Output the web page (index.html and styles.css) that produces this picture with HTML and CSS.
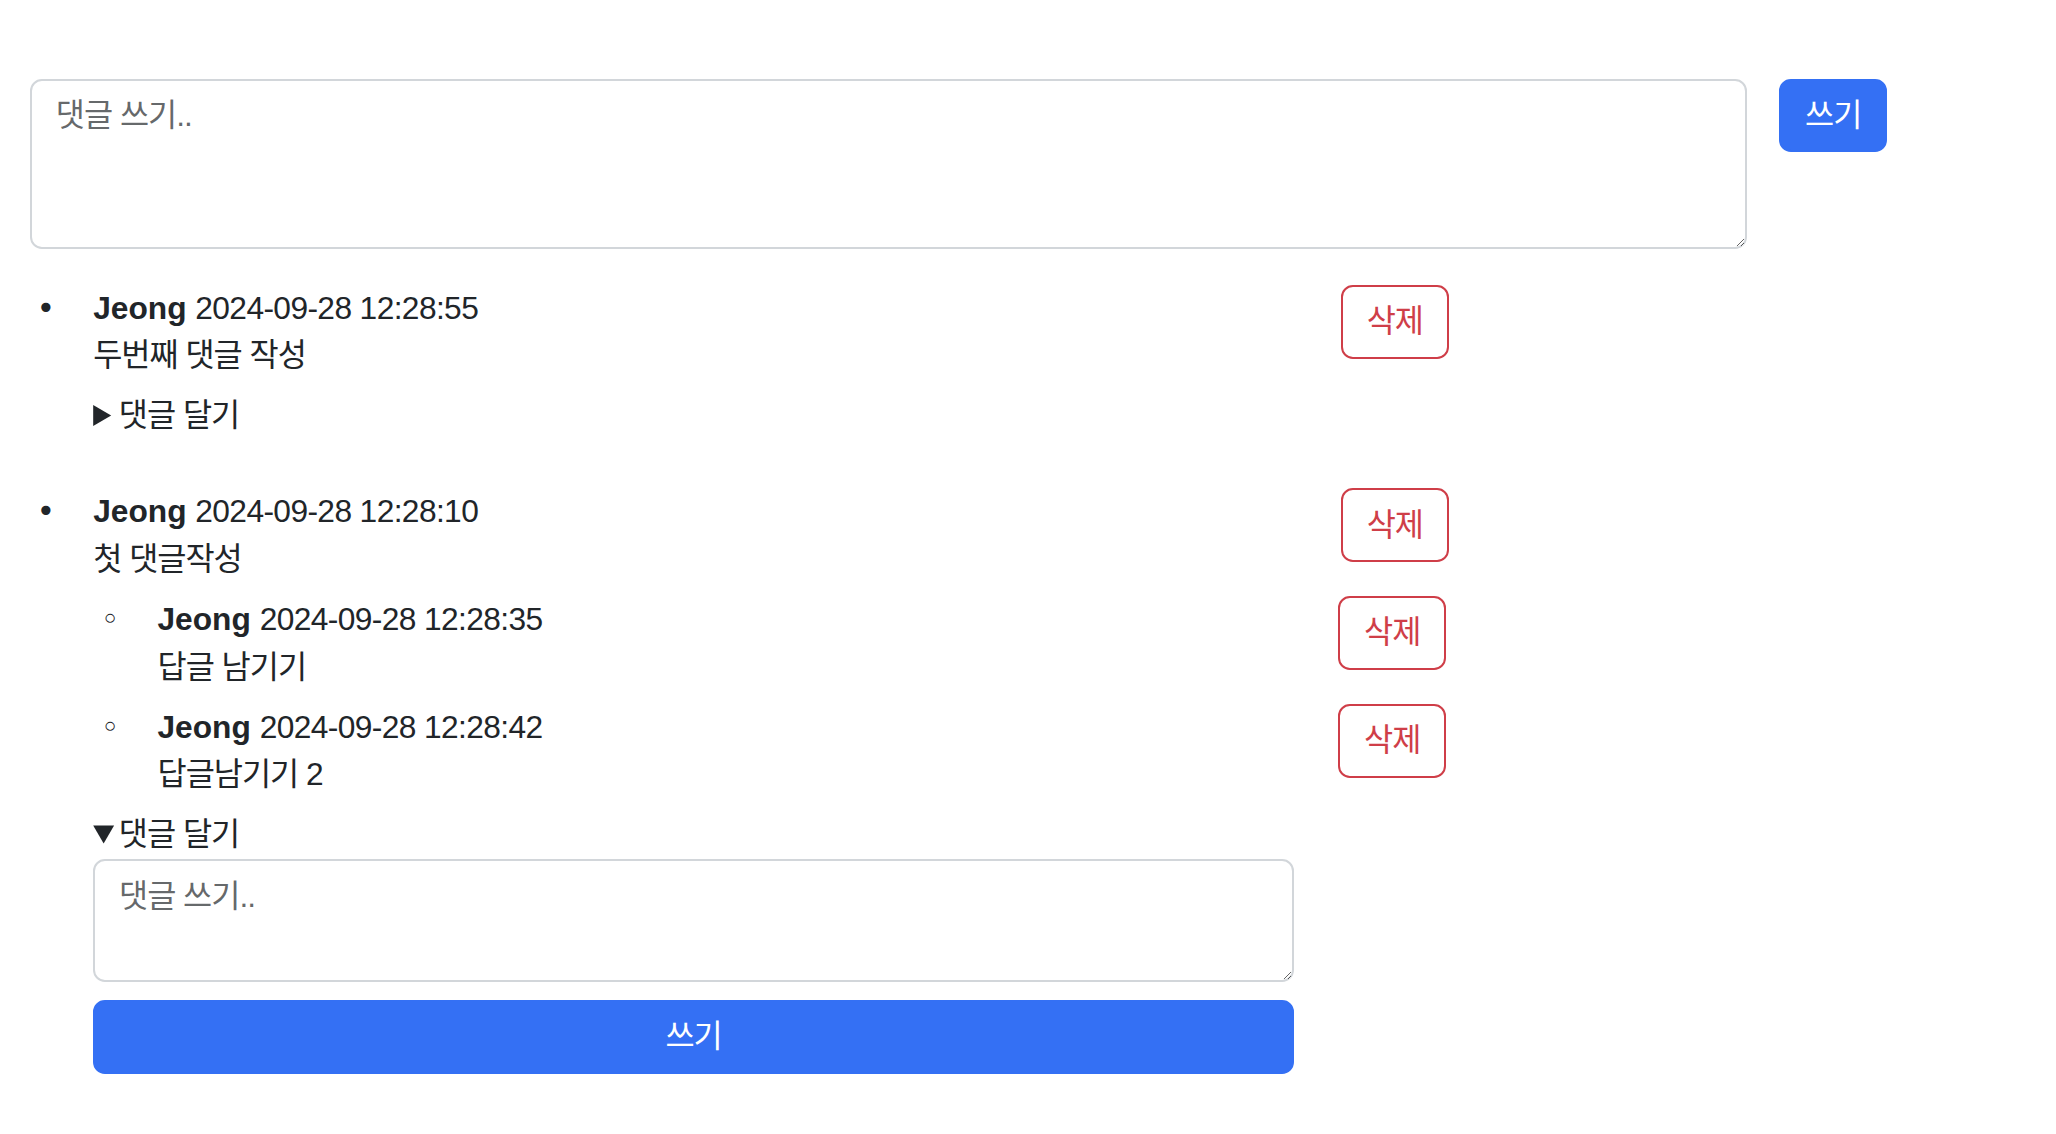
FILE: index.html
```html
<!DOCTYPE html>
<html lang="ko">
<head>
<meta charset="utf-8">
<title>댓글</title>
<link rel="stylesheet" href="styles.css">
</head>
<body>
<div class="page">
  <form class="new-comment">
    <textarea class="field field-main" rows="3" placeholder="댓글 쓰기.."></textarea>
    <button type="button" class="btn btn-primary">쓰기</button>
  </form>

  <ul class="comments">
    <li class="comment">
      <div class="comment-row">
        <div class="comment-body">
          <div class="meta"><strong class="author">Jeong</strong> <span class="date">2024-09-28 12:28:55</span></div>
          <div class="text">두번째 댓글 작성</div>
        </div>
        <button type="button" class="btn btn-delete">삭제</button>
      </div>
      <details class="reply">
        <summary><span class="summary-label">댓글 달기</span></summary>
        <textarea class="field field-reply" rows="2" placeholder="댓글 쓰기.."></textarea>
        <button type="button" class="btn btn-primary btn-block">쓰기</button>
      </details>
    </li>

    <li class="comment">
      <div class="comment-row">
        <div class="comment-body">
          <div class="meta"><strong class="author">Jeong</strong> <span class="date">2024-09-28 12:28:10</span></div>
          <div class="text">첫 댓글작성</div>
        </div>
        <button type="button" class="btn btn-delete">삭제</button>
      </div>
      <ul class="replies">
        <li class="comment">
          <div class="comment-row">
            <div class="comment-body">
              <div class="meta"><strong class="author">Jeong</strong> <span class="date">2024-09-28 12:28:35</span></div>
              <div class="text">답글 남기기</div>
            </div>
            <button type="button" class="btn btn-delete">삭제</button>
          </div>
        </li>
        <li class="comment">
          <div class="comment-row">
            <div class="comment-body">
              <div class="meta"><strong class="author">Jeong</strong> <span class="date">2024-09-28 12:28:42</span></div>
              <div class="text">답글남기기 2</div>
            </div>
            <button type="button" class="btn btn-delete">삭제</button>
          </div>
        </li>
      </ul>
      <details class="reply" open>
        <summary><span class="summary-label">댓글 달기</span></summary>
        <textarea class="field field-reply" rows="2" placeholder="댓글 쓰기.."></textarea>
        <button type="button" class="btn btn-primary btn-block">쓰기</button>
      </details>
    </li>
  </ul>
</div>
</body>
</html>
```

FILE: styles.css
```css
* {
  box-sizing: border-box;
}

html, body {
  margin: 0;
  padding: 0;
  background: #ffffff;
}

body {
  font-family: "Liberation Sans", "Noto Sans CJK KR", sans-serif;
  font-size: 31.7px;
  line-height: 47.6px;
  color: #212529;
}

.page {
  padding: 78.5px 30px 0;
}

.new-comment {
  display: flex;
  align-items: flex-start;
  gap: 32.8px;
  margin: 0;
}

.field {
  display: block;
  font-family: inherit;
  font-size: 31.7px;
  line-height: 47.6px;
  letter-spacing: -1px;
  color: #212529;
  background: #ffffff;
  border: 2px solid #d2d6da;
  border-radius: 11.9px;
  padding: 11.9px 23.8px;
  margin: 0;
  outline: none;
}

.field::placeholder {
  color: rgba(33, 37, 41, 0.7);
  letter-spacing: -1px;
}

.field-main {
  flex: none;
  width: 1716.5px;
  height: 170.6px;
}

.field-reply {
  width: 100%;
  height: 122.5px;
}

.btn {
  font-family: inherit;
  font-size: 31.7px;
  line-height: 47.6px;
  letter-spacing: -1px;
  padding: 11.2px 23.8px;
  border: 2px solid transparent;
  border-radius: 11.9px;
  background: transparent;
  margin: 0;
  cursor: pointer;
  flex: none;
}

.btn-primary {
  background: #3470f4;
  border-color: #3470f4;
  color: #ffffff;
}

.btn-delete {
  color: #cf3e48;
  border-color: #cf3e48;
  background: #ffffff;
}

.btn-block {
  display: block;
  width: 100%;
  margin-top: 18px;
}

.comments {
  width: 1418.8px;
  margin: 35.5px 0 0;
  padding: 0 0 0 63.2px;
  list-style: disc;
}

.comments > .comment {
  margin-bottom: 48.5px;
}

.comments > .comment::marker {
  content: "\2022\2003\2009";
  font-family: "DejaVu Sans", sans-serif;
  font-size: 31.7px;
  color: #212529;
}

.replies {
  margin: 0 2.6px 0 0;
  padding: 0 0 0 64.3px;
  list-style: circle;
}

.replies > .comment {
  margin-bottom: 0;
}

.replies > .comment::marker {
  content: "\25E6\2003\2009";
  font-family: "DejaVu Sans", sans-serif;
  font-size: 31.7px;
  color: #212529;
}

.comment-row {
  display: flex;
  justify-content: space-between;
  align-items: flex-start;
  margin-bottom: 12.5px;
}

.author {
  font-weight: 700;
}

.date {
  letter-spacing: -0.6px;
}

.text {
  letter-spacing: -1px;
}

.reply {
  width: 1200.8px;
}

.reply summary {
  letter-spacing: -1px;
  cursor: pointer;
}

.summary-label {
  margin-left: -8px;
}
```
